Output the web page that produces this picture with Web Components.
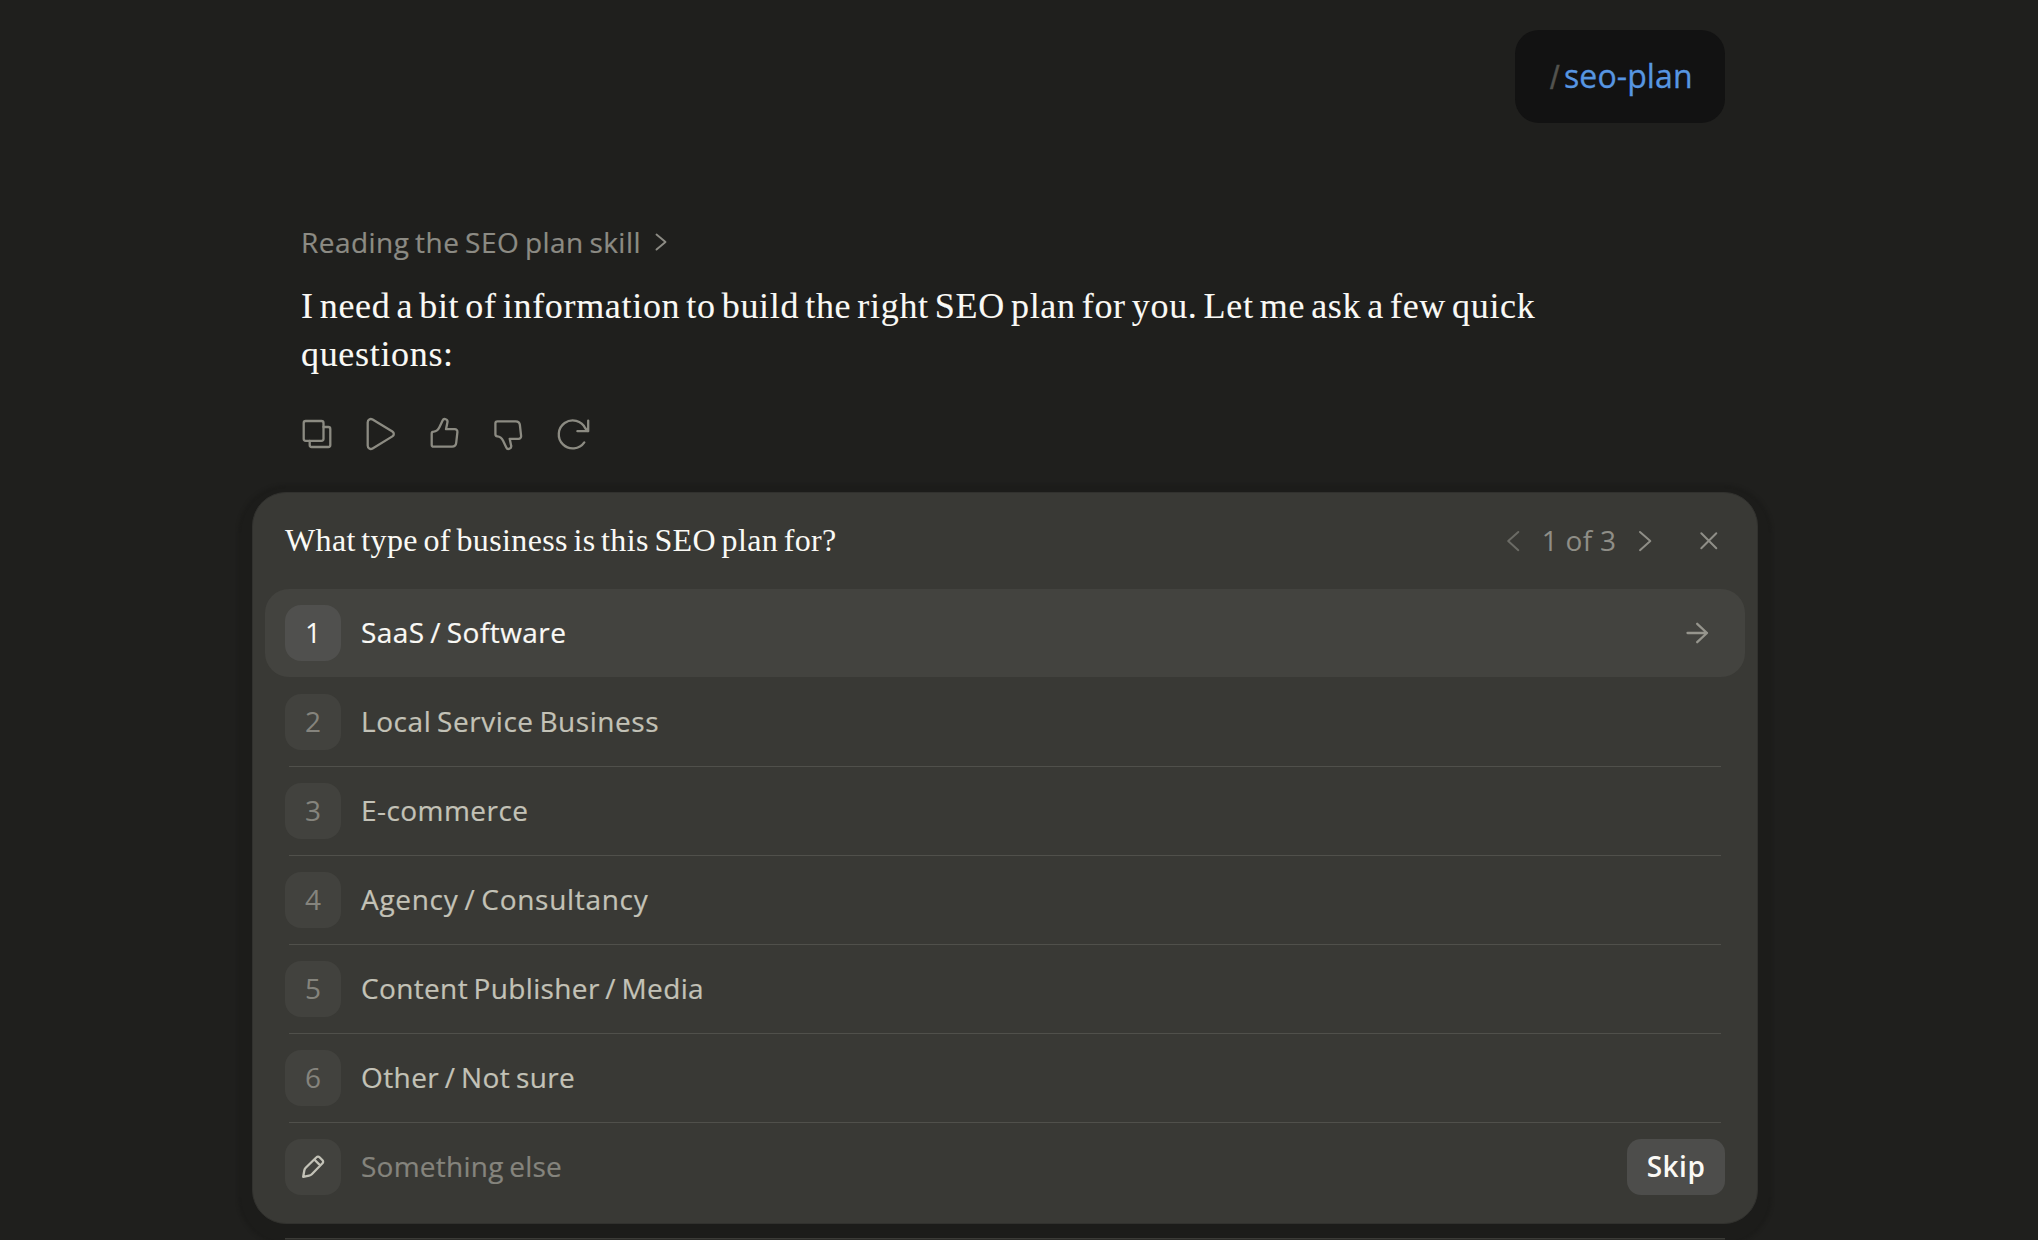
<!DOCTYPE html>
<html lang="en">
<head>
<meta charset="utf-8">
<title>SEO plan</title>
<style>
  html,
  body {
    margin: 0;
    height: 1240px;
    overflow: hidden;
    background: #1f1f1d;
  }

  body {
    font-family: 'Open Sans', 'Liberation Sans', sans-serif;
    font-size: 28px;
    color: #faf9f5;
  }
</style>
</head>
<body>
  <chat-thread>
    <command-chip slot="prompt">seo-plan</command-chip>
    <skill-step slot="reply">Reading the SEO plan skill</skill-step>
    <reply-text slot="reply">I need a bit of information to build the right SEO plan for you. Let me ask a few quick questions:</reply-text>
    <reply-actions slot="reply"></reply-actions>

    <question-card current="1" total="3">
      <span slot="title">What type of business is this SEO plan for?</span>
      <option-row number="1" tracking="0.45" selected>SaaS / Software</option-row>
      <option-row number="2" tracking="0.55">Local Service Business</option-row>
      <option-row number="3" tracking="0.45">E-commerce</option-row>
      <option-row number="4" tracking="0.7">Agency / Consultancy</option-row>
      <option-row number="5" tracking="0.35">Content Publisher / Media</option-row>
      <option-row number="6" tracking="0.4">Other / Not sure</option-row>
      <custom-answer slot="footer">Something else</custom-answer>
    </question-card>
    <chat-composer></chat-composer>
  </chat-thread>

<script>
const ICONS = {
  copy: `
    <rect x="6.7" y="7" width="19.8" height="19.8" rx="2"/>
    <path d="M26.5 13h4.8a2 2 0 0 1 2 2v16a2 2 0 0 1-2 2H14.7a2 2 0 0 1-2-2v-4.2"/>`,
  play: '<path d="M6.7 8.4c0-2.8 2.6-4.2 4.9-2.8l19.8 12c1.9 1.2 1.9 3.6 0 4.8l-19.8 12c-2.3 1.4-4.9 0-4.9-2.8z"/>',
  up: '<path d="M6.7 19.7a2 2 0 0 1 1.9-2c2.7-.3 4.6-1.9 5.8-4.4l3.2-6.8c.6-1.3 1.9-1.8 3.2-1.2 1.4.6 2 1.8 1.6 3.3L21 15.2h8.8a2.6 2.6 0 0 1 2.6 2.9L31.2 28.9a4.2 4.2 0 0 1-4.2 3.8H8.7a2 2 0 0 1-2-2z"/>',
  down: '<path transform="translate(-.3 40) scale(1 -1)" d="M6.7 19.7a2 2 0 0 1 1.9-2c2.7-.3 4.6-1.9 5.8-4.4l3.2-6.8c.6-1.3 1.9-1.8 3.2-1.2 1.4.6 2 1.8 1.6 3.3L21 15.2h8.8a2.6 2.6 0 0 1 2.6 2.9L31.2 28.9a4.2 4.2 0 0 1-4.2 3.8H8.7a2 2 0 0 1-2-2z"/>',
  retry: '<path d="M31.3 28.4A14 14 0 1 1 32.4 14.4L35 17.2M35.2 6.6v10.6H24.4"/>',
  prev: '<path d="M25.3 11 15.2 20 25.3 29.2"/>',
  next: '<path d="M15 11 25.3 20 15 29.2"/>',
  step: '<path d="M15.5 12.5 24.5 20 15.5 27.6"/>',
  close: '<path d="M12.3 12.2 27.3 27.2M27.3 12.2 12.3 27.2"/>',
  arrow: '<path d="M10.5 20h19.5M20.2 10.8l9.8 9.2-9.8 9.2"/>',
  pencil: '<path d="M10.2 29.8l1.1-6.3c.2-1.1.6-1.9 1.4-2.7L23.5 10.3a2.1 2.1 0 0 1 3 0l3 3a2.1 2.1 0 0 1 0 3L18.8 27.2c-.8.8-1.6 1.2-2.7 1.4zM21.3 12.5l5.9 5.9"/>'
};

class LineIcon extends HTMLElement {
  connectedCallback() {
    const root = this.attachShadow({ mode: 'open' });
    root.innerHTML = `
      <style>
        :host {
          display: block;
          flex: none;
          width: 40px;
          height: 40px;
        }

        svg {
          display: block;
          fill: none;
          stroke: currentColor;
          stroke-width: var(--stroke, 2.3);
          stroke-linecap: round;
          stroke-linejoin: round;
        }
      </style>
      <svg width="40" height="40" viewBox="0 0 40 40">${ICONS[this.getAttribute('name')]}</svg>
    `;
  }
}

class ChatThread extends HTMLElement {
  constructor() {
    super();
    this.attachShadow({ mode: 'open' }).innerHTML = `
      <style>
        :host {
          display: flex;
          flex-direction: column;
          width: 1506px;
          padding: 30px 0 0 252px;
        }

        .prompt {
          display: flex;
          justify-content: flex-end;
          padding-right: 33px;
        }

        .reply {
          display: flex;
          flex-direction: column;
          padding: 99px 49px 38px;
        }
      </style>
      <div class="prompt"><slot name="prompt"></slot></div>
      <div class="reply"><slot name="reply"></slot></div>
      <slot></slot>
    `;
  }
}

class CommandChip extends HTMLElement {
  constructor() {
    super();
    this.attachShadow({ mode: 'open' }).innerHTML = `
      <style>
        :host {
          display: flex;
          box-sizing: border-box;
          width: 210px;
          height: 93px;
          padding-left: 35px;
          border-radius: 24px;
          background: #121212;
          color: #5796e2;
          font-size: 32px;
          line-height: 91px;
          letter-spacing: 0.1px;
          -webkit-text-stroke: 0.3px;
        }

        .slash {
          width: 14px;
          padding-top: 2px;
          color: #52524e;
          font-family: 'Liberation Sans', sans-serif;
          font-size: 34px;
        }
      </style>
      <span class="slash">/</span><slot></slot>
    `;
  }
}

class SkillStep extends HTMLElement {
  constructor() {
    super();
    this.attachShadow({ mode: 'open' }).innerHTML = `
      <style>
        :host {
          display: flex;
          height: 40px;
          line-height: 40px;
          letter-spacing: 0.46px;
          word-spacing: -2px;
          color: #8c8b84;
          -webkit-text-stroke: 0.2px;
          --stroke: 1.9;
        }
      </style>
      <slot></slot><line-icon name="step"></line-icon>
    `;
  }
}

class ReplyText extends HTMLElement {
  constructor() {
    super();
    this.attachShadow({ mode: 'open' }).innerHTML = `
      <style>
        :host {
          display: block;
          margin-top: 20px;
          padding-right: 140px;
          font-family: 'Liberation Serif', serif;
          font-size: 36px;
          line-height: 48px;
          letter-spacing: 0.68px;
          word-spacing: -3.6px;
          -webkit-text-stroke: 0.1px;
        }
      </style>
      <slot></slot>
    `;
  }
}

class ReplyActions extends HTMLElement {
  constructor() {
    super();
    this.attachShadow({ mode: 'open' }).innerHTML = `
      <style>
        :host {
          display: flex;
          gap: 24px;
          margin: 36px 0 0 -4px;
          color: #8c8b82;
        }
      </style>
      <line-icon name="copy"></line-icon>
      <line-icon name="play"></line-icon>
      <line-icon name="up"></line-icon>
      <line-icon name="down"></line-icon>
      <line-icon name="retry"></line-icon>
    `;
  }
}

class QuestionCard extends HTMLElement {
  connectedCallback() {
    const current = this.getAttribute('current');
    const total = this.getAttribute('total');

    this.attachShadow({ mode: 'open' }).innerHTML = `
      <style>
        :host {
          display: block;
          box-sizing: border-box;
          height: 732px;
          border: 1px solid #31312e;
          border-radius: 34px;
          background: #393935;
          box-shadow: 0 7px 3px 14px #1c1c1a;
        }

        header {
          display: flex;
          align-items: center;
          height: 96px;
          padding: 0 28px 0 32px;
          color: #8f8e87;
          --stroke: 2;
        }

        .title {
          flex: 1;
          padding-bottom: 2px;
          color: #faf9f5;
          font-family: 'Liberation Serif', serif;
          font-size: 32px;
          letter-spacing: 0.37px;
          word-spacing: -2.8px;
        }

        .count {
          width: 92px;
          padding-bottom: 2px;
          text-align: center;
          letter-spacing: 0.3px;
        }

        .prev {
          color: #6b6b65;
        }

        .close {
          margin-left: 24px;
        }

        .options {
          display: flex;
          flex-direction: column;
          gap: 1px;
          padding: 0 12px;
        }
      </style>
      <header>
        <div class="title"><slot name="title"></slot></div>
        <line-icon class="prev" name="prev"></line-icon>
        <div class="count">${current} of ${total}</div>
        <line-icon name="next"></line-icon>
        <line-icon class="close" name="close"></line-icon>
      </header>
      <div class="options">
        <slot></slot>
        <slot name="footer"></slot>
      </div>
    `;
  }
}

// shared by the numbered rows and the free-text row
const rowStyles = `
  :host {
    display: flex;
    align-items: center;
    box-sizing: border-box;
    height: 88px;
    padding: 0 28px 0 20px;
    color: #c3c2b7;
  }

  .badge {
    display: flex;
    align-items: center;
    justify-content: center;
    box-sizing: border-box;
    width: 56px;
    height: 56px;
    margin-right: 20px;
    border-radius: 16px;
    background: #42423e;
  }

  .label {
    flex: 1;
    padding-bottom: 2px;
    word-spacing: -2px;
    -webkit-text-stroke: 0.2px;
  }
`;

class OptionRow extends HTMLElement {
  connectedCallback() {
    const selected = this.hasAttribute('selected');

    this.attachShadow({ mode: 'open' }).innerHTML = `
      <style>
        ${rowStyles}

        /* the divider sits in the 1px gap below the row */
        :host(:not([selected])) {
          background: linear-gradient(#50504b, #50504b) 24px 100% / 1432px 1px no-repeat;
          height: 89px;
          margin-bottom: -1px;
          padding-bottom: 1px;
        }

        :host([selected]) {
          border-radius: 24px;
          background: #43433f;
          color: #faf9f5;
        }

        .badge {
          padding-bottom: 2px;
          color: #85847d;
        }

        :host([selected]) .badge {
          background: #50504e;
          color: #faf9f5;
        }

        .label {
          letter-spacing: ${this.getAttribute('tracking')}px;
        }

        line-icon {
          color: #96958d;
        }
      </style>
      <div class="badge">${this.getAttribute('number')}</div>
      <div class="label"><slot></slot></div>
      ${selected ? '<line-icon name="arrow"></line-icon>' : ''}
    `;
  }
}

class CustomAnswer extends HTMLElement {
  constructor() {
    super();
    this.attachShadow({ mode: 'open' }).innerHTML = `
      <style>
        ${rowStyles}

        :host {
          padding-right: 20px;
          color: #85847d;
          letter-spacing: 0.25px;
        }

        line-icon {
          color: #c3c2b7;
        }

        button {
          width: 98px;
          height: 56px;
          padding: 0 0 2px;
          border: 0;
          border-radius: 14px;
          background: #4d4d4b;
          color: #faf9f5;
          font: 600 28px 'Open Sans', sans-serif;
          letter-spacing: 0.5px;
        }
      </style>
      <div class="badge"><line-icon name="pencil"></line-icon></div>
      <div class="label"><slot></slot></div>
      <button>Skip</button>
    `;
  }
}

// only the top edge shows above the fold
class ChatComposer extends HTMLElement {
  constructor() {
    super();
    this.attachShadow({ mode: 'open' }).innerHTML = `
      <style>
        :host {
          display: block;
          height: 1px;
          margin: 14px 33px 0;
          border-top: 1px solid #3b3b37;
          background: #2c2c29;
        }
      </style>
    `;
  }
}

customElements.define('line-icon', LineIcon);
customElements.define('chat-thread', ChatThread);
customElements.define('command-chip', CommandChip);
customElements.define('skill-step', SkillStep);
customElements.define('reply-text', ReplyText);
customElements.define('reply-actions', ReplyActions);
customElements.define('question-card', QuestionCard);
customElements.define('option-row', OptionRow);
customElements.define('custom-answer', CustomAnswer);
customElements.define('chat-composer', ChatComposer);
</script>
</body>
</html>
